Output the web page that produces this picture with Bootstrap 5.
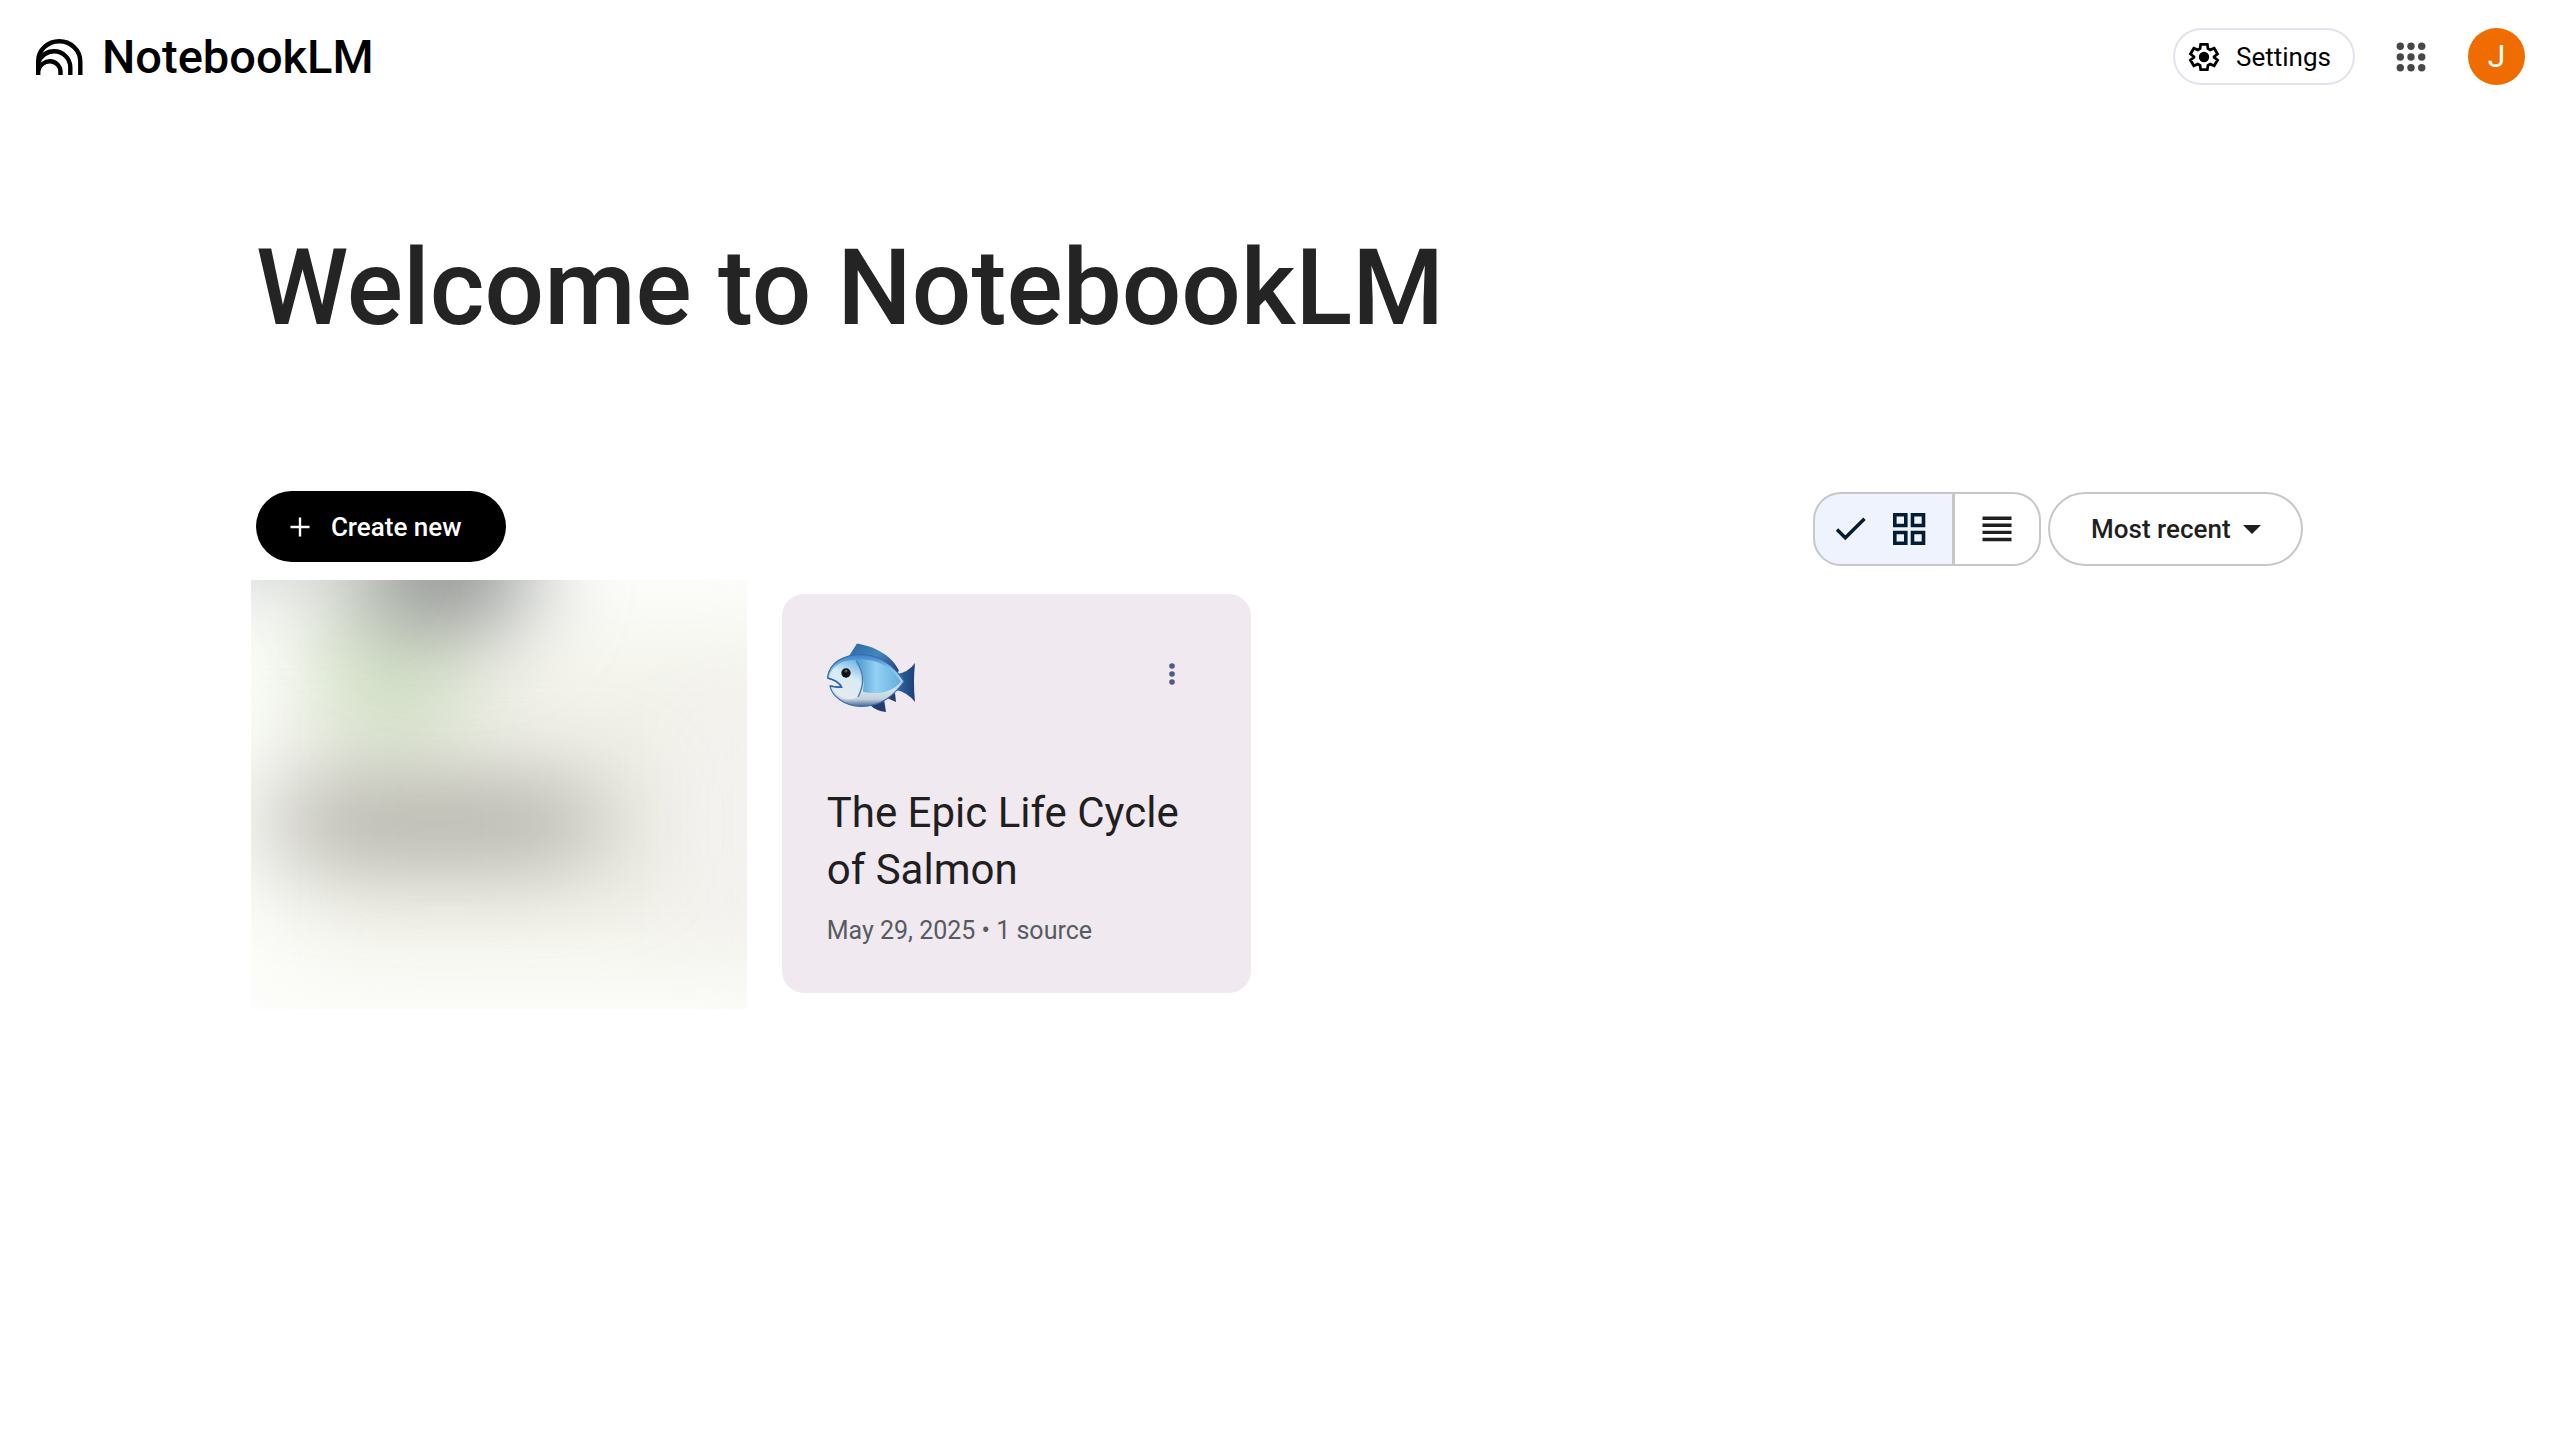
<!DOCTYPE html>
<html lang="en">
<head>
<meta charset="utf-8">
<meta name="viewport" content="width=device-width, initial-scale=1">
<title>NotebookLM</title>
<link href="https://cdn.jsdelivr.net/npm/bootstrap@5.3.0/dist/css/bootstrap.min.css" rel="stylesheet">
<style>
  body { font-family: Roboto, "Liberation Sans", sans-serif; font-size: 26px; line-height: 36px; color: #1f1f1f; background: #fff; }
  svg { display: block; flex: none; }
  .top-bar { padding: 28px 34px; }
  .brand-link { gap: 18px; color: #000; font-size: 47px; line-height: 57px; font-weight: 500; }
  .brand-link:hover { color: #000; }
  .settings-btn { gap: 16px; height: 57px; padding: 0 22px 0 13px; border: 2px solid #e1e4ee; border-radius: 29px; font-size: 26px; line-height: 36px; font-weight: 400; color: #000; }
  .apps-btn { width: 57px; height: 57px; margin: 0 29px 0 27px; }
  .avatar { width: 57px; height: 57px; background: #ef6c00; font-size: 32px; line-height: 57px; color: #fff; }
  .page-main { padding: 116px 10% 60px; }
  .page-title { margin: 0 0 142px; font-size: 105px; line-height: 120px; font-weight: 500; color: #242424; }
  .tool-row { min-height: 75px; margin-bottom: 28px; }
  .create-btn { gap: 18px; height: 71px; padding: 0 44px 0 31px; border-radius: 36px; border: 0; background: #000; color: #fff; font-size: 26px; line-height: 36px; font-weight: 500; }
  .create-btn:hover { background: #222; color: #fff; }
  .right-tools { gap: 7px; }
  .view-toggle .btn { height: 74px; border: 2px solid #c7c7c7; border-radius: 28px; color: #1f1f1f; background: #fff; }
  .view-toggle .btn-check:checked + .btn { background: #eef3fe; border-color: #c7c7c7; color: #001d35; }
  .view-toggle .grid-choice { gap: 21px; padding: 0 25px 0 17px; }
  .view-toggle .list-choice { padding: 0 25px; }
  .sort-select { appearance: none; width: 255px; height: 74px; padding: 0 64px 0 41px; border: 2px solid #c7c7c7; border-radius: 37px; background: #fff; color: #1f1f1f; font-size: 26px; line-height: 36px; font-weight: 500; }
  .sort-caret { right: 42px; top: 33px; pointer-events: none; }
  .notebooks { --bs-gutter-x: 56px; --bs-gutter-y: 56px; }
  .nb-card { min-height: 399px; padding: 44px 43px 44px 45px; border: 0; border-radius: 22px; background: #f0e9ef; }
  .nb-icon { margin-top: 4px; }
  .nb-menu { width: 72px; height: 72px; }
  .nb-title { font-size: 42px; line-height: 57px; font-weight: 400; margin: 0; color: #1f1f1f; }
  .nb-meta { margin: 15px 0 0; font-size: 25px; line-height: 36px; color: #575b5f; }
  .nb-hidden { min-height: 399px; }
  .nb-veil { top: -14px; left: -5px; right: -21px; bottom: -16px; }
  .nb-veil svg { width: 100%; height: 100%; }
</style>
</head>
<body>
<header class="top-bar d-flex align-items-center justify-content-between">
  <a href="#" class="brand-link d-flex align-items-center text-decoration-none">
    <svg width="50" height="38" viewBox="0 0 50 38" fill="none" stroke="#000" stroke-width="4.4">
      <path d="M4.2 37V23.5C4.2 11.7 14 3.2 25.3 3.2S46.3 12 46.3 23.5V37"/>
      <path d="M4.2 25C6.5 17.5 13 13.3 20 13.3C29 13.3 36.3 20.5 36.3 29.5V37"/>
      <path d="M4.2 32.5C6 26.5 11 23.3 16 23.3C22 23.3 26.5 28.5 26.5 33.500V37"/>
    </svg>
    <span>NotebookLM</span>
  </a>
  <div class="d-flex align-items-center">
    <button type="button" class="settings-btn btn d-flex align-items-center">
      <svg width="32" height="32" viewBox="0 0 32 32">
        <path d="M12.7 3.3h6.6l.7 4.3 2.2 1.3 4-1.6 3.3 5.7-3.4 2.6v.8l3.4 2.6-3.3 5.7-4-1.6-2.2 1.3-.7 4.3h-6.6l-.7-4.3-2.200-1.300-4 1.600L2.500 19l3.400-2.600v-.8L2.500 13l3.300-5.700 4 1.600L12 7.600z" fill="none" stroke="#000" stroke-width="2.8"/>
        <circle cx="16" cy="16" r="5.200" fill="#000"/>
      </svg>
      <span>Settings</span>
    </button>
    <button type="button" class="apps-btn btn p-0 border-0 d-flex align-items-center justify-content-center" aria-label="Google apps">
      <svg width="30" height="30" viewBox="0 0 30 30" fill="#474747">
        <circle cx="4.3" cy="4.3" r="3.7"/><circle cx="15" cy="4.3" r="3.7"/><circle cx="25.7" cy="4.3" r="3.7"/>
        <circle cx="4.3" cy="15" r="3.7"/><circle cx="15" cy="15" r="3.7"/><circle cx="25.7" cy="15" r="3.7"/>
        <circle cx="4.3" cy="25.7" r="3.7"/><circle cx="15" cy="25.7" r="3.7"/><circle cx="25.7" cy="25.7" r="3.7"/>
      </svg>
    </button>
    <button type="button" class="avatar btn p-0 border-0 rounded-circle" aria-label="Account">J</button>
  </div>
</header>

<main class="page-main">
  <h1 class="page-title">Welcome to NotebookLM</h1>

  <div class="tool-row d-flex justify-content-between">
    <button type="button" class="create-btn btn d-flex align-items-center align-self-start">
      <svg width="26" height="26" viewBox="0 0 26 26" stroke="#fff" stroke-width="2.4"><path d="M13 3.5v19M3.5 13h19"/></svg>
      <span>Create new</span>
    </button>
    <div class="right-tools d-flex align-self-end">
      <div class="view-toggle btn-group" role="group" aria-label="View">
        <input type="radio" class="btn-check" name="view" id="view-grid" checked>
        <label class="grid-choice btn d-flex align-items-center" for="view-grid" aria-label="Grid view">
          <svg width="38" height="38" viewBox="0 0 38 38" fill="none" stroke="currentColor" stroke-width="3.4"><path d="M5 19.5l8.300 8.300L32.500 8.700"/></svg>
          <svg width="36" height="36" viewBox="0 0 36 36" fill="none" stroke="currentColor" stroke-width="3.6"><path d="M3.8 3.8h11v10.700h-11zM21.500 3.800h11v10.700h-11zM3.800 21.500h11v10.700h-11zM21.500 21.500h11v10.700h-11z"/></svg>
        </label>
        <input type="radio" class="btn-check" name="view" id="view-list">
        <label class="list-choice btn d-flex align-items-center" for="view-list" aria-label="List view">
          <svg width="34" height="34" viewBox="0 0 34 34" stroke="currentColor" stroke-width="3.4"><path d="M2.5 6.200h29M2.500 13.300h29M2.500 20.400h29M2.500 27.500h29"/></svg>
        </label>
      </div>
      <div class="position-relative">
        <select class="sort-select" aria-label="Sort notebooks">
          <option>Most recent</option>
          <option>Title</option>
          <option>Shared</option>
        </select>
        <svg class="sort-caret position-absolute" width="18" height="9" viewBox="0 0 18 9"><path d="M0 0h18L9 9z" fill="#1f1f1f"/></svg>
      </div>
    </div>
  </div>

  <div class="notebooks row row-cols-4">
    <div class="col">
      <div class="nb-hidden position-relative">
        <div class="nb-veil position-absolute overflow-hidden">
          <svg viewBox="0 0 496 429" preserveAspectRatio="none" aria-hidden="true">
            <defs>
              <filter id="soft" filterUnits="userSpaceOnUse" x="-250" y="-250" width="1000" height="930" color-interpolation-filters="sRGB"><feGaussianBlur stdDeviation="46"/></filter>
              <filter id="softer" filterUnits="userSpaceOnUse" x="-250" y="-250" width="1000" height="930" color-interpolation-filters="sRGB"><feGaussianBlur stdDeviation="52 42"/></filter>
            </defs>
            <rect width="496" height="429" fill="#fdfefb"/>
            <rect x="50" y="55" width="520" height="330" fill="#f2f2ea" filter="url(#softer)"/>
            <rect x="450" y="120" width="120" height="240" fill="#f4f1f1" filter="url(#softer)"/>
            <ellipse cx="140" cy="95" rx="72" ry="90" fill="#d2e1c5" filter="url(#soft)"/>
            <ellipse cx="192" cy="-14" rx="92" ry="66" fill="#8c8e8d" filter="url(#soft)"/>
            <rect x="-60" y="-75" width="170" height="65" fill="#bcc0bf" filter="url(#soft)"/>
            <rect x="30" y="198" width="320" height="90" rx="20" fill="#b3b2aa" filter="url(#softer)"/>
          </svg>
        </div>
      </div>
    </div>
    <div class="col">
      <article class="nb-card card">
        <div class="d-flex justify-content-between align-items-start">
          <svg class="nb-icon" width="90" height="72" viewBox="1 0 90 72" role="img" aria-label="Fish">
            <defs>
              <linearGradient id="fin" x1="0" y1="0" x2="1" y2="1"><stop offset="0" stop-color="#29669f"/><stop offset=".45" stop-color="#4387bd"/><stop offset="1" stop-color="#1d3567"/></linearGradient>
              <linearGradient id="tail" x1="0" y1="0" x2="1" y2="0"><stop offset="0" stop-color="#2f6cac"/><stop offset=".6" stop-color="#23508a"/><stop offset="1" stop-color="#1f3f73"/></linearGradient>
              <linearGradient id="body" x1="0" y1="0" x2="0" y2="1"><stop offset="0" stop-color="#3b7fc9"/><stop offset=".25" stop-color="#7cbbe9"/><stop offset=".7" stop-color="#d3e3ec"/><stop offset=".86" stop-color="#c3d1da"/><stop offset="1" stop-color="#3b6799"/></linearGradient>
              <linearGradient id="flank" x1="0" y1="0" x2="1" y2="0"><stop offset="0" stop-color="#4c97cd"/><stop offset=".45" stop-color="#93d1f4"/><stop offset="1" stop-color="#64ade0"/></linearGradient>
              <linearGradient id="face" x1=".7" y1="0" x2=".3" y2="1"><stop offset="0" stop-color="#74b9ea"/><stop offset=".4" stop-color="#d7ebf6"/><stop offset="1" stop-color="#e7ebed"/></linearGradient>
            </defs>
            <path d="M23 14L31 1.5C45 4 65 11 73 29L66 34z" fill="url(#fin)"/>
            <path d="M70 32Q82 31 89 21Q87 40 89 60Q81 50 70 48z" fill="url(#tail)"/>
            <path d="M44 63Q50 69 60 70L58 57zM61 56L70 60L69 51z" fill="#243d70"/>
            <path d="M1.5 36C3 21 17 12.5 36 12.5C55 13 70 26 78 39.5C68 53 56 64.5 35 64.5C18 64 6 54 4 44L15 45.5Q14 40 1.5 36z" fill="url(#body)" stroke="#376cab" stroke-width="1.2"/>
            <path d="M30 18C50 15 66 26 75 39.5C66 50 54 53 37 50Q40 33 30 18z" fill="url(#flank)"/>
            <path d="M30 18Q18 17 10 24Q4 29 3 35.5Q15 39 16 46Q11 47 6 45C9 54 20 61 32 55Q42 38 30 18z" fill="url(#face)"/>
            <path d="M30 19Q42 36 32 55" fill="none" stroke="#527c9e" stroke-width="1.3"/>
            <path d="M1.5 36Q13 39 15.5 45Q10 45.5 4 44" fill="none" stroke="#2769af" stroke-width="1.8"/>
            <circle cx="20" cy="31" r="4.7" fill="#101113"/><circle cx="20" cy="29" r="1.5" fill="#555b60"/>
          </svg>
          <button type="button" class="nb-menu btn p-0 border-0 d-flex align-items-center justify-content-center" aria-label="Notebook menu">
            <svg width="8" height="24" viewBox="0 0 8 24" fill="#4f5b87"><circle cx="4" cy="4" r="2.8"/><circle cx="4" cy="12" r="2.8"/><circle cx="4" cy="20" r="2.8"/></svg>
          </button>
        </div>
        <h2 class="nb-title mt-auto">The Epic Life Cycle of Salmon</h2>
        <p class="nb-meta">May 29, 2025 • 1 source</p>
      </article>
    </div>
  </div>
</main>
<script src="https://cdn.jsdelivr.net/npm/bootstrap@5.3.0/dist/js/bootstrap.bundle.min.js"></script>
</body>
</html>
